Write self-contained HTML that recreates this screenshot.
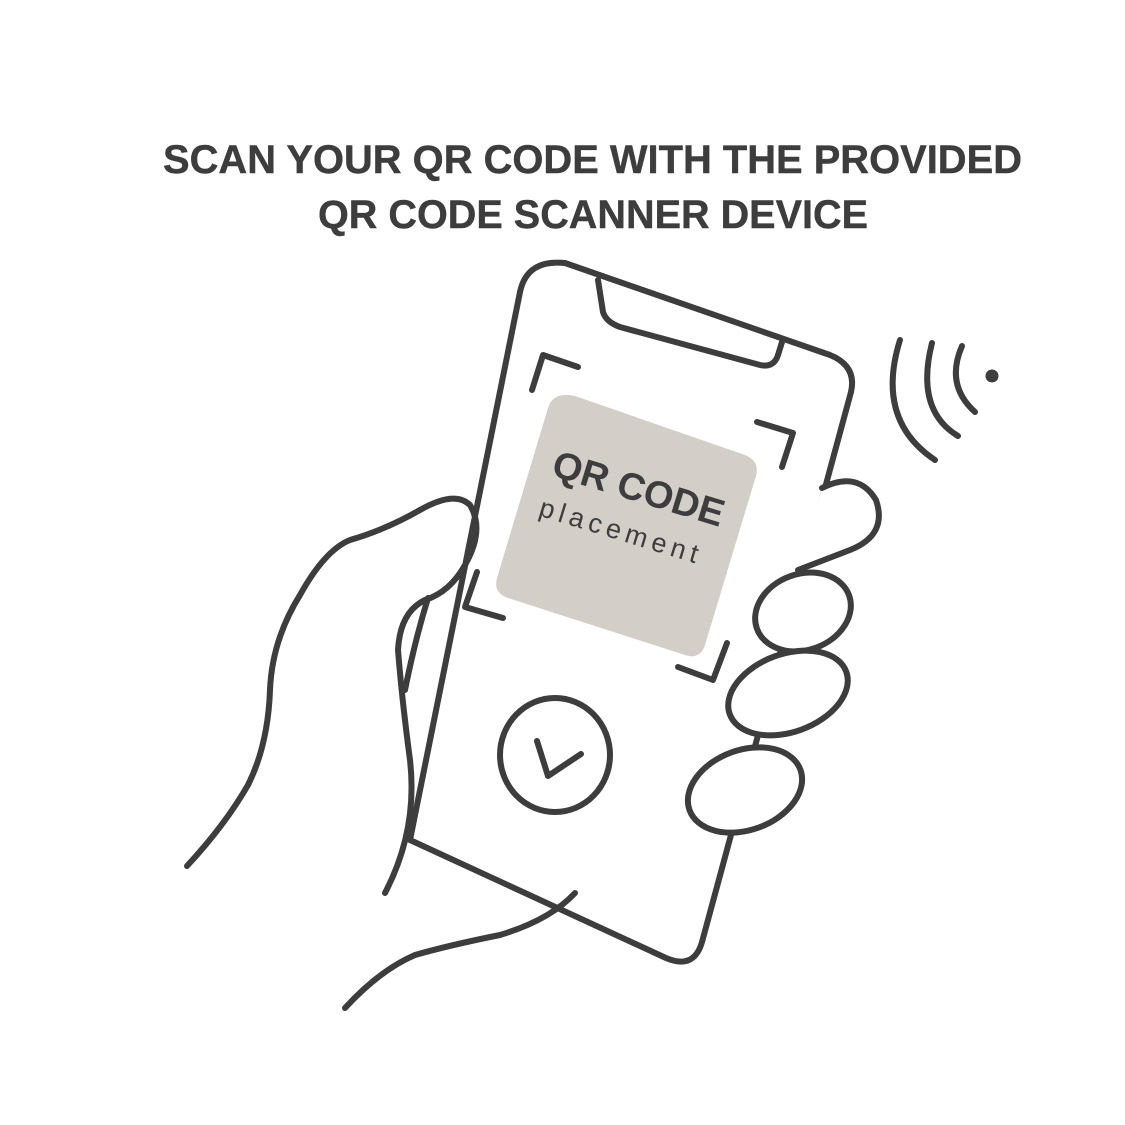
<!DOCTYPE html>
<html><head><meta charset="utf-8"><style>
html,body{margin:0;padding:0;background:#fff;}
svg{display:block;}
</style></head><body>
<svg width="1125" height="1125" viewBox="0 0 1125 1125" xmlns="http://www.w3.org/2000/svg">
<rect width="1125" height="1125" fill="#fff"/>
<g font-family="Liberation Sans, sans-serif" fill="#3d3d3d" stroke="#3d3d3d" stroke-width="0.4" font-weight="bold">
<text x="163" y="173" font-size="40" textLength="859" lengthAdjust="spacingAndGlyphs">SCAN YOUR QR CODE WITH THE PROVIDED</text>
<text x="318" y="228" font-size="40" textLength="550" lengthAdjust="spacingAndGlyphs">QR CODE SCANNER DEVICE</text>
</g>
<g fill="none" stroke="#3d3d3d" stroke-width="6" stroke-linecap="round" stroke-linejoin="round">
<path d="M575,396 L745,455 Q760,461 756,476 L705,645 Q700,660 685,655 L508,598 Q493,593 497,578 L548,408 Q553,391 575,396 Z" fill="#d3cec7" stroke="none"/>
<path d="M565,263 L830,355 Q857,366 851,392 L702,942 Q694,970 666,958 L410,840"/>
<path d="M410,840 L520,292 Q527,259 565,263"/>
<path d="M598,280 L603,312 Q606,322 620,327 L760,365 Q774,368 778,355 L782,342"/>
<path d="M532,390 L543,355 L578,367"/>
<path d="M757,422 L793,433 L782,467"/>
<path d="M477,572 L465,607 L503,618"/>
<path d="M727,643 L713,680 L678,667"/>
<ellipse cx="555" cy="755" rx="55" ry="57"/>
<path d="M537,741 L548,776 L581,754"/>
<path d="M822,488 Q858,470 876,500 Q888,535 850,550 L798,570" fill="#fff"/>
<ellipse cx="803" cy="612" rx="49" ry="38" transform="rotate(-20 803 612)" fill="#fff"/>
<ellipse cx="788" cy="693" rx="62" ry="39" transform="rotate(-20 788 693)" fill="#fff"/>
<ellipse cx="745" cy="790" rx="59" ry="40" transform="rotate(-20 745 790)" fill="#fff"/>
<path d="M187,866 Q225,825 248,785 Q268,745 270,690 Q272,640 300,595 Q325,550 350,540 Q385,530 420,510 Q455,490 470,505 Q485,530 465,565 Q450,592 425,600 Q400,612 398,650 Q402,700 410,760 Q418,830 385,893"/>
<path d="M428,598 Q415,640 405,690"/>
<path d="M345,1008 Q380,970 415,955 Q450,945 500,935 Q550,920 575,893"/>
<path d="M962,346 Q945,385 975,412"/>
<path d="M932,343 Q915,410 958,436"/>
<path d="M900,340 Q875,420 935,460"/>
</g>
<circle cx="992" cy="376" r="6.5" fill="#3d3d3d"/>
<g font-family="Liberation Sans, sans-serif" fill="#3d3d3d" transform="rotate(17 630 510)">
<text x="632" y="500" font-size="38" font-weight="bold" text-anchor="middle">QR CODE</text>
<text x="628" y="542" font-size="27" text-anchor="middle" letter-spacing="5">placement</text>
</g>
</svg>
</body></html>
